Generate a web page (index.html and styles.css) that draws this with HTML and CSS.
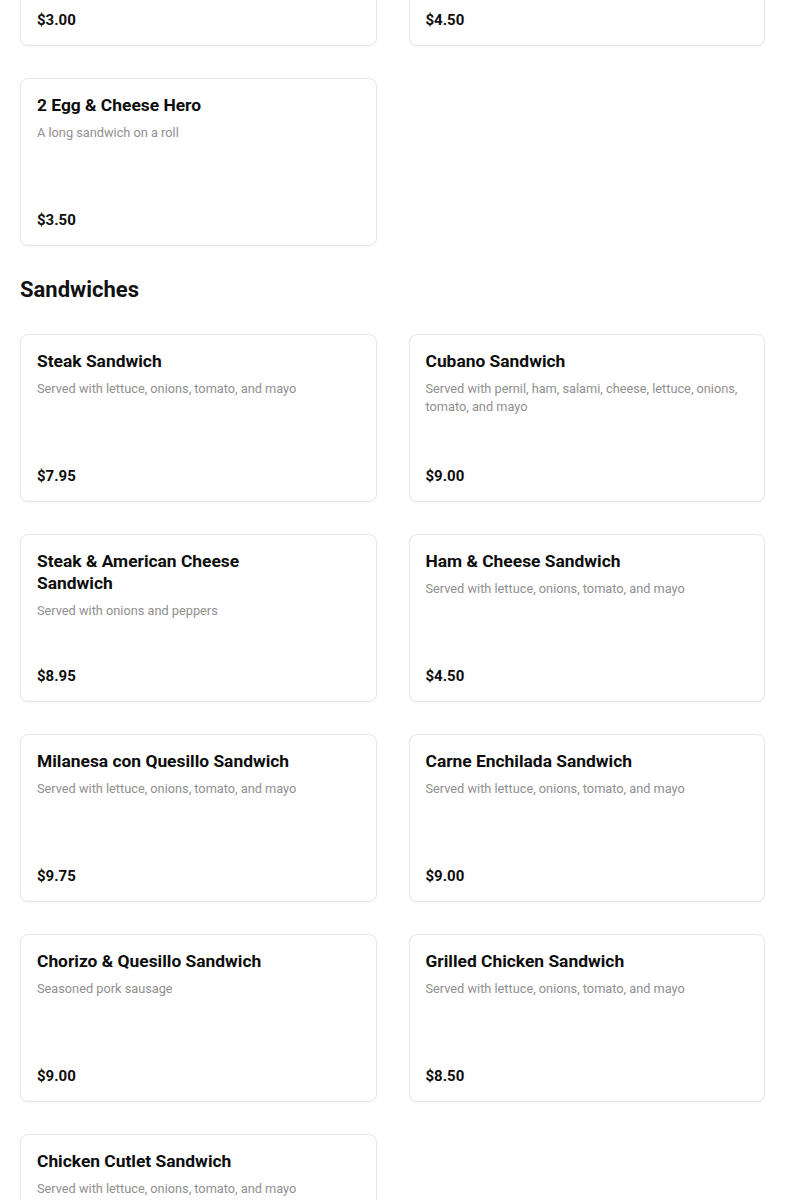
FILE: index.html
```html
<!DOCTYPE html>
<html lang="en">
<head>
<meta charset="utf-8">
<title>Menu</title>
<link rel="stylesheet" href="styles.css">
</head>
<body>
<main class="menu">
  <section class="section section-scrolled">
    <div class="grid">
      <div class="card">
        <h3 class="card-title">Egg &amp; Cheese Sandwich</h3>
        <p class="card-desc">Served on a roll</p>
        <div class="card-price">$3.00</div>
      </div>
      <div class="card">
        <h3 class="card-title">Bacon, Egg &amp; Cheese Sandwich</h3>
        <p class="card-desc">Served on a roll</p>
        <div class="card-price">$4.50</div>
      </div>
      <div class="card">
        <h3 class="card-title">2 Egg &amp; Cheese Hero</h3>
        <p class="card-desc">A long sandwich on a roll</p>
        <div class="card-price">$3.50</div>
      </div>
    </div>
  </section>

  <section class="section">
    <h2 class="section-title">Sandwiches</h2>
    <div class="grid">
      <div class="card">
        <h3 class="card-title">Steak Sandwich</h3>
        <p class="card-desc">Served with lettuce, onions, tomato, and mayo</p>
        <div class="card-price">$7.95</div>
      </div>
      <div class="card">
        <h3 class="card-title">Cubano Sandwich</h3>
        <p class="card-desc">Served with pernil, ham, salami, cheese, lettuce, onions, tomato, and mayo</p>
        <div class="card-price">$9.00</div>
      </div>
      <div class="card">
        <h3 class="card-title">Steak &amp; American Cheese Sandwich</h3>
        <p class="card-desc">Served with onions and peppers</p>
        <div class="card-price">$8.95</div>
      </div>
      <div class="card">
        <h3 class="card-title">Ham &amp; Cheese Sandwich</h3>
        <p class="card-desc">Served with lettuce, onions, tomato, and mayo</p>
        <div class="card-price">$4.50</div>
      </div>
      <div class="card">
        <h3 class="card-title">Milanesa con Quesillo Sandwich</h3>
        <p class="card-desc">Served with lettuce, onions, tomato, and mayo</p>
        <div class="card-price">$9.75</div>
      </div>
      <div class="card">
        <h3 class="card-title">Carne Enchilada Sandwich</h3>
        <p class="card-desc">Served with lettuce, onions, tomato, and mayo</p>
        <div class="card-price">$9.00</div>
      </div>
      <div class="card">
        <h3 class="card-title">Chorizo &amp; Quesillo Sandwich</h3>
        <p class="card-desc">Seasoned pork sausage</p>
        <div class="card-price">$9.00</div>
      </div>
      <div class="card">
        <h3 class="card-title">Grilled Chicken Sandwich</h3>
        <p class="card-desc">Served with lettuce, onions, tomato, and mayo</p>
        <div class="card-price">$8.50</div>
      </div>
      <div class="card">
        <h3 class="card-title">Chicken Cutlet Sandwich</h3>
        <p class="card-desc">Served with lettuce, onions, tomato, and mayo</p>
        <div class="card-price">$8.50</div>
      </div>
    </div>
  </section>
</main>
</body>
</html>
```
FILE: styles.css
```css
* { box-sizing: border-box; }

html, body {
  margin: 0;
  padding: 0;
  background: #ffffff;
}

body {
  font-family: Roboto, "Liberation Sans", Arial, sans-serif;
  color: #111111;
}

.menu {
  padding: 0 20px;
}

.section-scrolled {
  margin-top: -122px;
}

.section + .section {
  margin-top: 30px;
}

.section-title {
  margin: 0 0 30px;
  font-size: 22px;
  line-height: 28px;
  font-weight: 700;
  color: #111111;
}

.grid {
  display: grid;
  grid-template-columns: 1fr 1fr;
  gap: 32px;
}

.card {
  display: flex;
  flex-direction: column;
  height: 168px;
  padding: 15px 16px;
  border: 1px solid #e6e6e6;
  border-radius: 8px;
  background: #ffffff;
  box-shadow: 0 1px 2px rgba(0, 0, 0, 0.04);
}

.card-title {
  margin: 0;
  max-width: 80%;
  font-size: 17.4px;
  line-height: 22px;
  font-weight: 700;
  color: #0d0d0d;
}

.card-desc {
  margin: 8px 0 0;
  font-size: 12.75px;
  line-height: 18px;
  color: #8f8f8f;
}

.card-price {
  margin-top: auto;
  font-size: 15px;
  line-height: 20px;
  font-weight: 700;
  color: #0d0d0d;
}
```
